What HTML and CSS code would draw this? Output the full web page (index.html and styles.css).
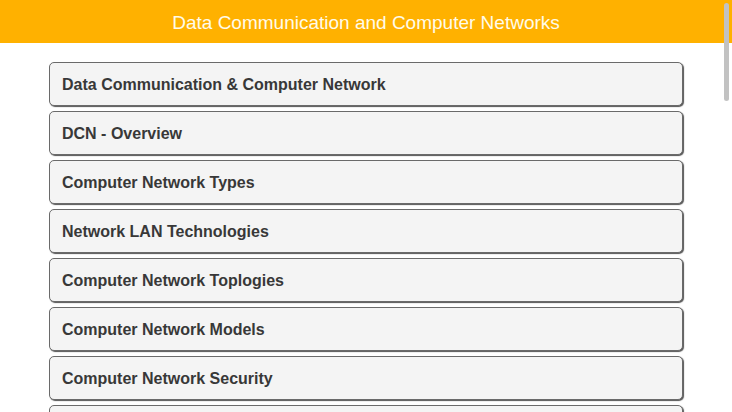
FILE: index.html
```html
<!DOCTYPE html>
<html>
<head>
<meta charset="utf-8">
<link rel="stylesheet" href="styles.css">
</head>
<body>
<header class="topbar">Data Communication and Computer Networks</header>
<main class="list">
  <div class="card">Data Communication &amp; Computer Network</div>
  <div class="card">DCN - Overview</div>
  <div class="card">Computer Network Types</div>
  <div class="card">Network LAN Technologies</div>
  <div class="card">Computer Network Toplogies</div>
  <div class="card">Computer Network Models</div>
  <div class="card">Computer Network Security</div>
  <div class="card"></div>
</main>
<div class="scrollthumb"></div>
</body>
</html>
```
FILE: styles.css
```css
html, body {
  margin: 0;
  padding: 0;
  background: #fff;
  font-family: "Liberation Sans", Arial, sans-serif;
}
body {
  height: 412px;
  overflow: hidden;
}
.topbar {
  height: 43px;
  background: #ffb100;
  color: #fffbea;
  font-size: 19px;
  line-height: 45px;
  text-align: center;
}
.list {
  display: flex;
  flex-direction: column;
  gap: 5px;
  padding: 19px 49px 0 49px;
}
.card {
  height: 42px;
  line-height: 44px;
  padding: 0 12px;
  background: #f4f4f4;
  border: 1px solid #6a6a6a;
  border-radius: 5px;
  box-shadow: 1px 1px 1px #555;
  color: #383838;
  font-size: 16px;
  font-weight: bold;
  box-sizing: content-box;
  overflow: hidden;
}
.scrollthumb {
  position: absolute;
  top: 3px;
  left: 724px;
  width: 5px;
  height: 98px;
  border-radius: 3px;
  background: #c2c2c2;
}
```
